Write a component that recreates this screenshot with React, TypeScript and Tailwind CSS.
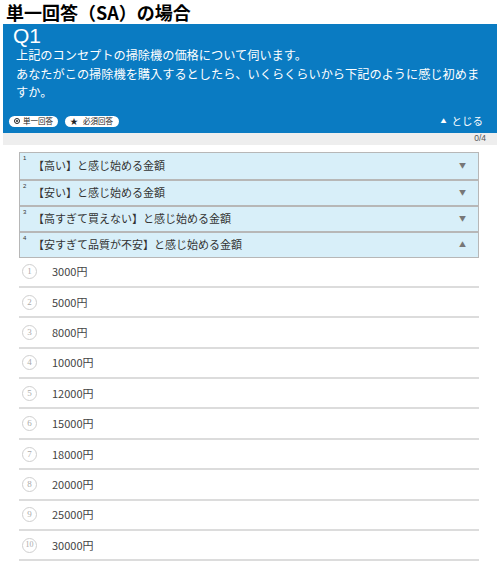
import React from 'react';

const font = { fontFamily: '"Noto Sans CJK JP", "Noto Sans", sans-serif' };

const questions = [
  '【高い】と感じ始める金額',
  '【安い】と感じ始める金額',
  '【高すぎて買えない】と感じ始める金額',
  '【安すぎて品質が不安】と感じ始める金額',
];

const options = ['3000円', '5000円', '8000円', '10000円', '12000円', '15000円', '18000円', '20000円', '25000円', '30000円'];

export default function App() {
  return (
    <div className="w-[500px] h-[564px] bg-white overflow-hidden" style={font}>
      {/* Title */}
      <h1 className="pl-[6px] h-[24px] text-[18px] font-bold leading-[24px] text-black">単一回答（SA）の場合</h1>

      {/* Question header */}
      <div className="mx-[3px] bg-[#0a7bc2] text-white">
        <div className="px-[13px] pt-[2px]">
          <div className="-ml-[3px] text-[21px] leading-[20px] font-normal" style={{ fontFamily: '"Liberation Sans", Arial, sans-serif' }}>Q1</div>
          <p className="text-[12.2px] leading-[18.5px]">
            上記のコンセプトの掃除機の価格について伺います。
            <br />
            あなたがこの掃除機を購入するとしたら、いくらくらいから下記のように感じ初めますか。
          </p>
        </div>
        <div className="flex items-center justify-between pl-[6px] pr-[14px] pt-[14px] pb-[6px]">
          <div className="flex gap-[7px]">
            <span className="flex items-center gap-[3px] h-[11px] px-[5px] rounded-full bg-white text-[#222] text-[7.5px] leading-none">
              <span className="inline-block w-[6px] h-[6px] rounded-full border border-[#222] relative">
                <span className="absolute inset-[1px] rounded-full bg-[#222]" />
              </span>
              単一回答
            </span>
            <span className="flex items-center gap-[5px] h-[11px] pl-[5px] pr-[6px] rounded-full bg-white text-[#222] text-[7.5px] leading-none">
              <span className="text-[8px]">★</span>
              必須回答
            </span>
          </div>
          <div className="flex items-center gap-[5px] text-[10.5px] leading-none">
            <span className="text-[6px]">▲</span>
            とじる
          </div>
        </div>
      </div>

      {/* Progress */}
      <div className="mx-[3px] h-[12px] bg-[#eeeeee] flex items-center justify-end pr-[11px]">
        <span className="text-[8.5px] leading-none text-[#555]" style={{ fontFamily: '"Liberation Sans", Arial, sans-serif' }}>0/4</span>
      </div>

      <div className="ml-[19px] mr-[21px] mt-[7px]">
        {/* Sub questions */}
        <div className="border border-[#b7b7b7] bg-[#d8eff9]">
          {questions.map((q, i) => (
            <div
              key={i}
              className={`relative flex items-center justify-between h-[26px] pl-[13px] pr-[12px] ${i > 0 ? 'border-t-2 border-[#b7b7b7]' : ''}`}
            >
              <span className="absolute left-[3px] top-[2px] text-[6px] leading-none text-[#333]" style={{ fontFamily: '"Liberation Sans", Arial, sans-serif' }}>{i + 1}</span>
              <span className="text-[11px] text-[#333] leading-none">{q}</span>
              <span className="text-[7px] text-[#777] leading-none">{i === 3 ? '▲' : '▼'}</span>
            </div>
          ))}
        </div>

        {/* Options */}
        <div>
          {options.map((o, i) => (
            <div key={o} className="flex items-center h-[30.4px] border-b-2 border-[#dcdcdc]">
              <span
                className="ml-[3px] w-[15px] h-[15px] rounded-full border border-[#cfcfcf] flex items-center justify-center text-[#aaa] leading-none"
                style={{ fontFamily: '"Liberation Serif", serif', fontSize: i === 9 ? '8px' : '9px' }}
              >
                {i + 1}
              </span>
              <span className="ml-[15px] text-[11px] text-[#444] leading-none">{o}</span>
            </div>
          ))}
        </div>
      </div>
    </div>
  );
}
